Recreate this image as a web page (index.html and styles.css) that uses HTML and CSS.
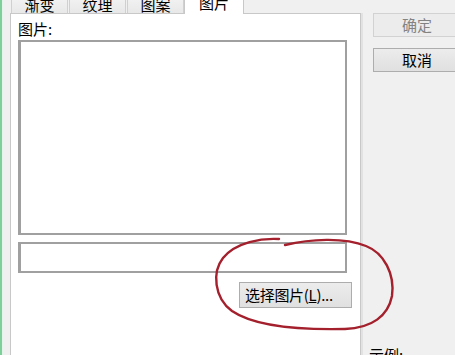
FILE: index.html
```html
<!DOCTYPE html>
<html lang="zh-CN">
<head>
  <meta charset="UTF-8">
  <title>填充效果</title>
  <link rel="stylesheet" href="styles.css">
</head>
<body>
  <div class="window">
    <div class="stripe"></div>

    <!-- 选项卡区域 -->
    <div class="tab-area">
      <div class="tabs">
        <div class="tab">渐变</div>
        <div class="tab">纹理</div>
        <div class="tab">图案</div>
        <div class="tab active">图片</div>
      </div>
      <div class="panel">
        <div class="label">图片:</div>
        <div class="preview"></div>
        <div class="filename"></div>
        <button class="btn pick">选择图片(<u>L</u>)...</button>
      </div>
    </div>

    <!-- 右侧按钮 -->
    <div class="side">
      <button class="btn side-btn" disabled>确定</button>
      <button class="btn side-btn">取消</button>
      <div class="sample">示例:</div>
    </div>
  </div>

  <!-- 手绘圈 -->
  <svg class="mark" width="455" height="355" viewBox="0 0 455 355">
    <path d="M279,239 C262,238 236,242 223,258 C212,272 214,298 232,311 C254,326 300,330 345,329 C372,328 388,316 392,296 C395,274 384,253 366,246 C344,237 310,239 285,245"
          fill="none" stroke="#a3202c" stroke-width="2.4" stroke-linecap="round"/>
  </svg>
</body>
</html>
```

FILE: styles.css
```css
body {
  margin: 0;
  background: #f0f0f0;
  font-family: "Noto Sans CJK SC", "Noto Sans", sans-serif;
  font-size: 15px;
  color: #000;
  overflow: hidden;
}
.window {
  display: flex;
  height: 355px;
}
.stripe {
  width: 2px;
  flex-shrink: 0;
  background: #7fcf9a;
  border-right: 1px solid #e4f4ea;
}
.tab-area {
  margin-left: 7px;
  width: 351px;
  flex-shrink: 0;
  display: flex;
  flex-direction: column;
}
.tabs {
  display: flex;
  align-items: flex-end;
  height: 22px;
  margin-top: -9px;
  padding-left: 1px;
  position: relative;
  z-index: 1;
}
.tab {
  width: 57px;
  height: 22px;
  box-sizing: border-box;
  border: 1px solid #d0d0d0;
  border-bottom: none;
  background: linear-gradient(#f6f6f6, #e8e8e8);
  text-align: center;
  line-height: 18px;
  padding-top: 4px;
  margin-right: 1px;
}
.tab.active {
  width: 60px;
  height: 25px;
  margin: 0 -1px -1px -1px;
  background: #fff;
  border-color: #c8c8c8;
  padding-top: 4px;
}
.panel {
  flex: 1;
  background: #fff;
  border: 1px solid #c8c8c8;
  border-bottom: none;
  box-shadow: 2px 0 0 #e2e2e2;
  padding: 6px 13px 0 7px;
  display: flex;
  flex-direction: column;
}
.label {
  line-height: 18px;
  height: 20px;
}
.preview, .filename {
  border: 2px solid #a0a0a0;
  border-left-width: 3px;
  background: #fff;
}
.preview {
  height: 191px;
}
.filename {
  height: 27px;
  margin-top: 7px;
}
.btn {
  font-family: inherit;
  font-size: 15px;
  color: #000;
  background: linear-gradient(#ececec, #e0e0e0);
  border: 1px solid #adadad;
  padding: 0;
  line-height: 20px;
}
.pick {
  align-self: flex-end;
  margin: 9px -5px 0 0;
  width: 113px;
  height: 26px;
  text-align: left;
  padding-left: 5px;
  white-space: nowrap;
  letter-spacing: -0.3px;
}
.side {
  margin-left: 12px;
  display: flex;
  flex-direction: column;
  flex-shrink: 0;
}
.side-btn {
  width: 88px;
  height: 24px;
  margin-top: 13px;
  flex-shrink: 0;
}
.side-btn + .side-btn {
  margin-top: 11px;
}
.side-btn:disabled {
  color: #838383;
  background: #ececec;
  border-color: #d2d2d2;
}
.sample {
  margin-top: auto;
  margin-bottom: -10px;
  margin-left: -4px;
  line-height: 20px;
}
.mark {
  position: absolute;
  left: 0;
  top: 0;
  pointer-events: none;
}
```
